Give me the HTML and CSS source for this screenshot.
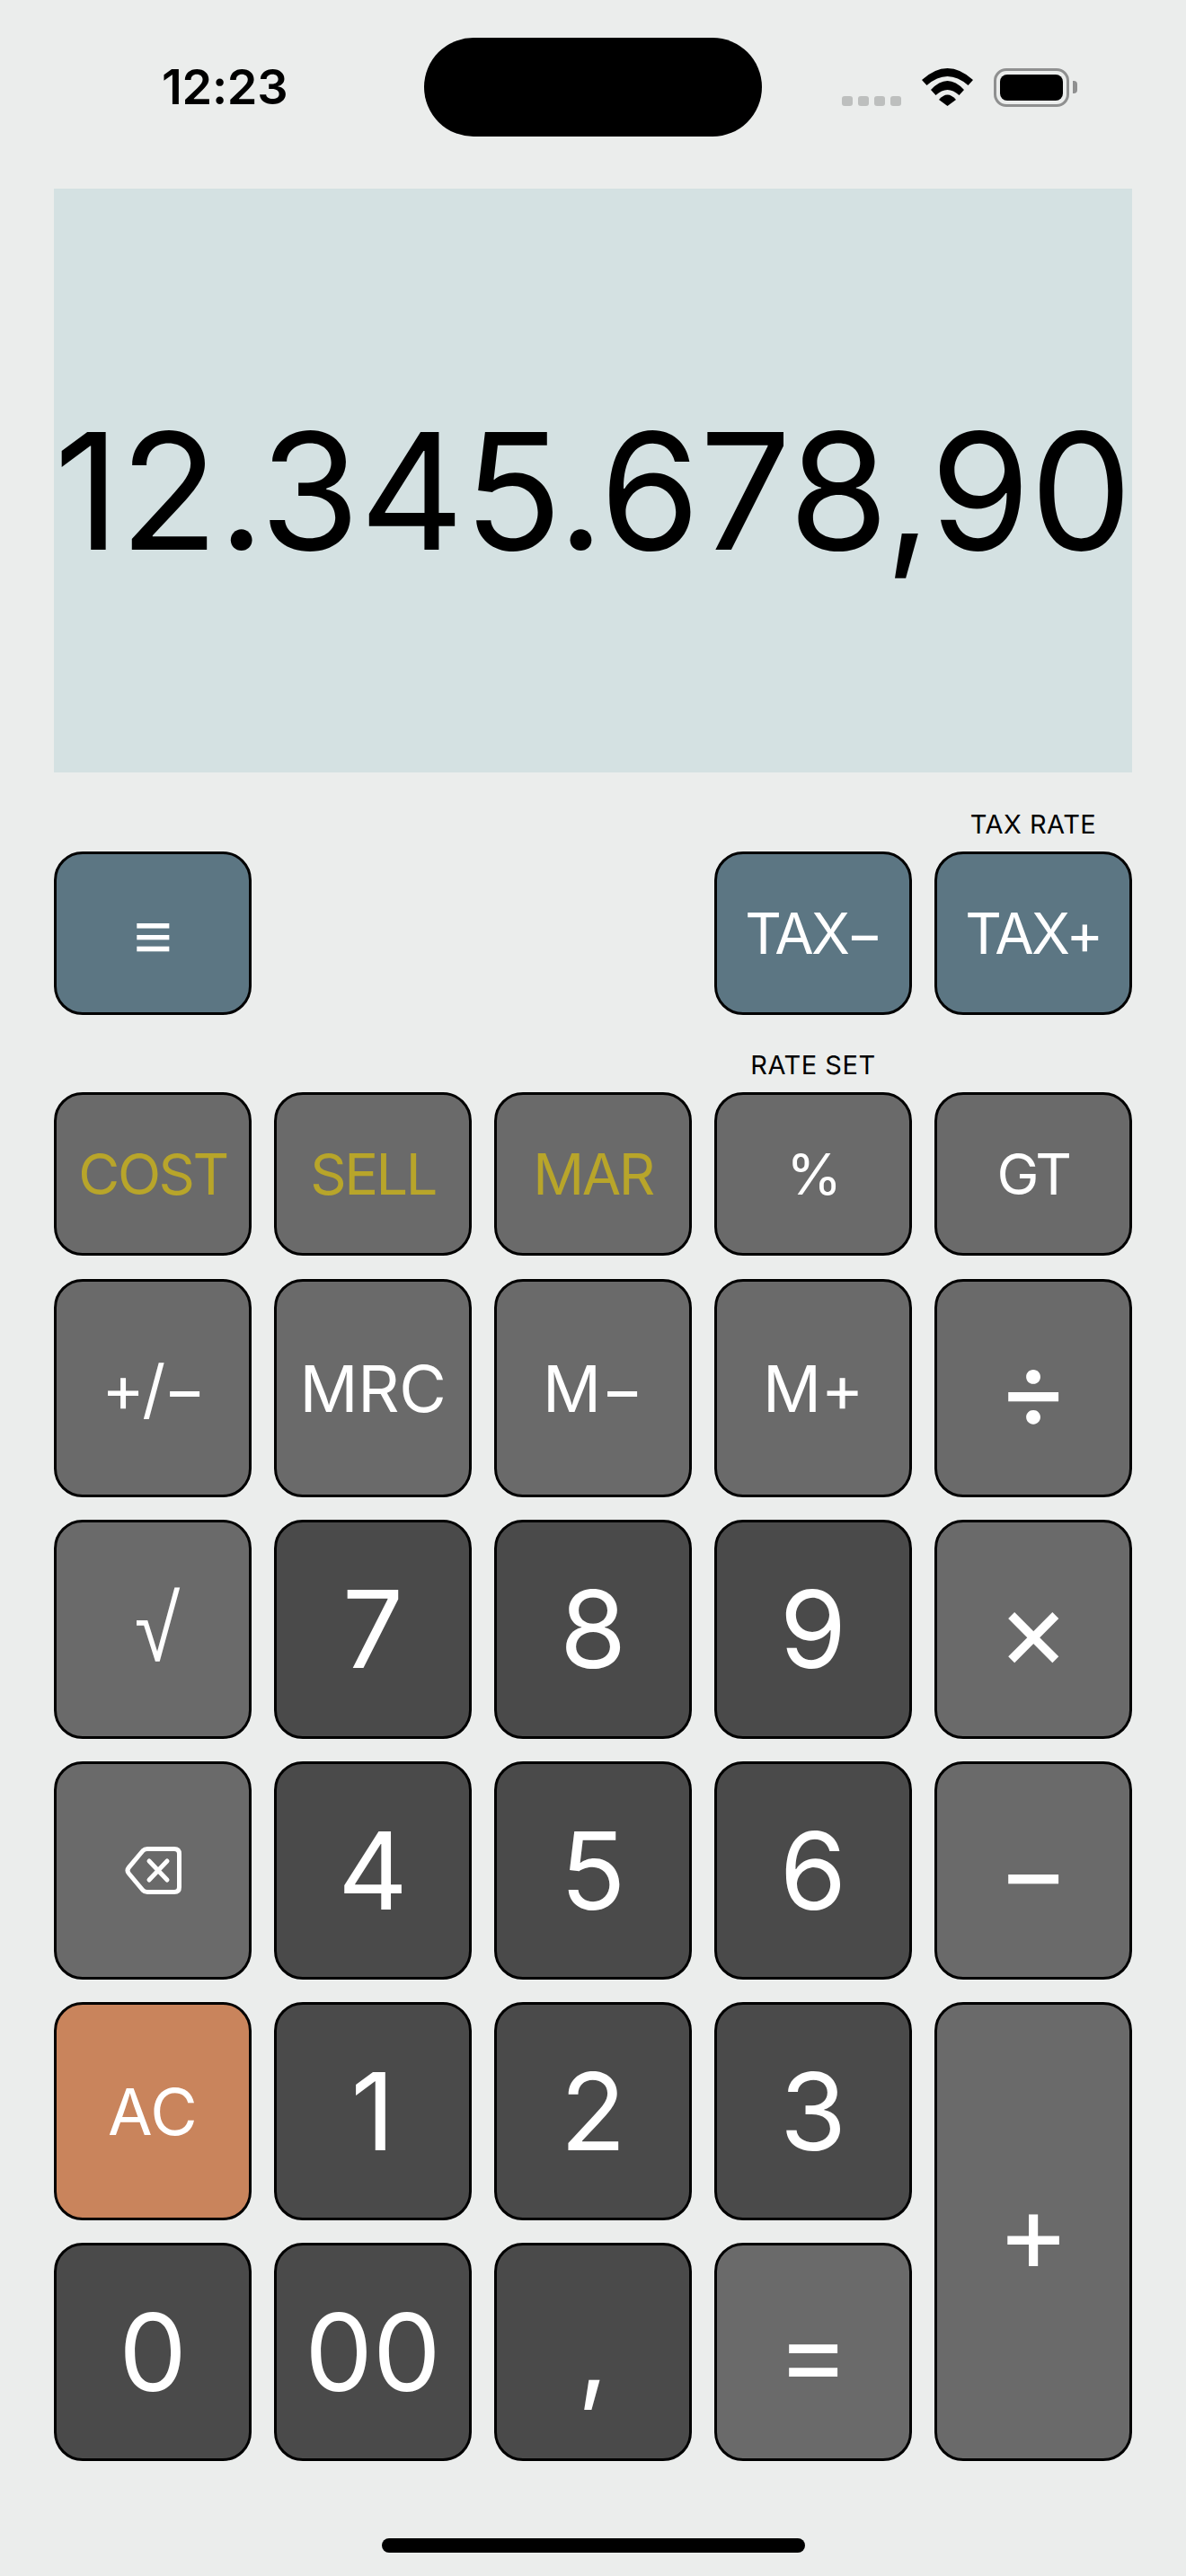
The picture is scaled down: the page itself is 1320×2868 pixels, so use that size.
FILE: index.html
```html
<!DOCTYPE html>
<html lang="en">
<head>
<meta charset="utf-8">
<title>Calculator</title>
<link rel="stylesheet" href="styles.css">
</head>
<body>
<div class="screen">
  <header class="status">
    <div class="time">12:23</div>
    <div class="island"></div>
    <div class="indicators">
      <div class="dots"><i></i><i></i><i></i><i></i></div>
      <svg class="wifi" viewBox="0 0 57 42" width="57" height="42"><path d="M0 13Q28.5-13 57 13L51.500 19Q28.500-1 5.500 19Z"/><path d="M10 24Q28.500 4 47 24L41.500 30Q28.500 18 15.500 30Z"/><path d="M19 35Q28.500 24 38 35L28.500 42Z"/></svg>
      <div class="battery"><div class="level"></div></div>
      <div class="cap"></div>
    </div>
  </header>
  <section class="display"><span>12.345.678,90</span></section>
  <section class="top-row">
    <button class="key teal menu">≡</button>
    <button class="key teal tax col4">TAX−</button>
    <button class="key teal tax"><span class="caption">TAX RATE</span>TAX+</button>
  </section>
  <section class="fn-row">
    <button class="key grey small gold">COST</button>
    <button class="key grey small gold">SELL</button>
    <button class="key grey small gold">MAR</button>
    <button class="key grey small"><span class="caption">RATE SET</span>%</button>
    <button class="key grey small">GT</button>
  </section>
  <section class="pad">
    <button class="key grey mid pm">+/−</button>
    <button class="key grey mid">MRC</button>
    <button class="key grey mid">M−</button>
    <button class="key grey mid">M+</button>
    <button class="key grey op">÷</button>
    <button class="key grey"><span class="root">√</span></button>
    <button class="key dark num">7</button>
    <button class="key dark num">8</button>
    <button class="key dark num">9</button>
    <button class="key grey op">×</button>
    <button class="key grey" aria-label="Backspace"><svg class="back" viewBox="0 0 63 53" width="63" height="53"><path d="M25 2.500H55Q60.500 2.500 60.500 8V45Q60.500 50.500 55 50.500H25Q22 50.500 20 48.500L4.500 30Q1.500 26.500 4.500 23L20 4.500Q22 2.500 25 2.500Z"/><path d="M27 16L47 37M47 16L27 37"/></svg></button>
    <button class="key dark num">4</button>
    <button class="key dark num">5</button>
    <button class="key dark num">6</button>
    <button class="key grey op">−</button>
    <button class="key orange ac">AC</button>
    <button class="key dark num">1</button>
    <button class="key dark num">2</button>
    <button class="key dark num">3</button>
    <button class="key grey op tall">+</button>
    <button class="key dark num">0</button>
    <button class="key dark num">00</button>
    <button class="key dark num">,</button>
    <button class="key grey op">=</button>
  </section>
  <div class="home"></div>
</div>
</body>
</html>
```
FILE: styles.css
```css
* { box-sizing: border-box; }
html, body { margin: 0; padding: 0; }
body { background: #ebedec; font-family: Inter, "Liberation Sans", sans-serif; }
.screen { width: 1320px; height: 2868px; padding: 42px 60px 0; background: #ebedec; display: flex; flex-direction: column; }

.status { height: 110px; display: flex; align-items: center; position: relative; }
.time { width: 412px; padding-left: 120px; font-size: 54px; font-weight: 600; letter-spacing: -0.3px; color: #000; margin-top: -1px; }
.island { width: 376px; height: 110px; background: #000; border-radius: 55px; }
.indicators { display: flex; align-items: flex-end; margin-left: 89px; height: 43px; }
.dots { display: flex; gap: 6px; margin-bottom: 1px; }
.dots i { display: block; width: 12px; height: 11px; border-radius: 3px; background: #bdbfbe; }
.wifi { display: block; margin-left: 23px; margin-bottom: 1px; fill: #000; }
.battery { width: 84px; height: 43px; margin-left: 23px; border: 3px solid #8f9090; border-radius: 14px; padding: 4px; }
.level { height: 100%; background: #000; border-radius: 8px; }
.cap { width: 5px; height: 14px; background: #8f9090; border-radius: 0 4px 4px 0; margin: 0 0 15px 4px; }

.display { margin-top: 58px; height: 650px; padding-top: 23px; background: #d4e1e2; display: flex; align-items: center; justify-content: center; }
.display span { font-size: 180px; letter-spacing: -0.3px; color: #000; white-space: nowrap; }

.top-row, .fn-row, .pad { display: grid; grid-template-columns: repeat(5, 220px); column-gap: 25px; }
.top-row { margin-top: 88px; grid-auto-rows: 182px; }
.col4 { grid-column: 4; }
.fn-row { margin-top: 86px; grid-auto-rows: 182px; }
.pad { margin-top: 26px; grid-auto-rows: 243.300px; row-gap: 25px; }

.key { position: relative; display: flex; align-items: center; justify-content: center; padding: 0; border: 3px solid #000; border-radius: 32px; color: #fff; font-family: inherit; font-weight: 400; }
.teal { background: #5c7683; }
.grey { background: #6a6a6a; }
.dark { background: #4a4a4a; }
.orange { background: #c9845c; }
.gold { color: #b8a52a; }
.tax, .small { font-size: 63px; letter-spacing: -2.500px; }
.menu { font-size: 74px; font-weight: 300; padding-top: 4px; }
.mid { font-size: 72px; letter-spacing: -0.4px; }
.pm { letter-spacing: -2.500px; }
.num { font-size: 120px; }
.op { font-size: 122px; }
.ac { font-size: 72px; }
.root { display: block; margin-left: 10px; font-family: "Liberation Sans", sans-serif; font-size: 92px; transform: scaleY(1.12); }
.tall { grid-column: 5; grid-row: 4 / span 2; }
.caption { position: absolute; left: -3px; right: -3px; bottom: calc(100% + 16px); text-align: center; font-size: 29px; line-height: 34px; letter-spacing: 0.5px; color: #000; }
.back { fill: none; stroke: #fff; stroke-width: 5px; stroke-linecap: round; stroke-linejoin: round; }

.home { width: 471px; height: 16px; margin: 86px auto 0; border-radius: 8px; background: #000; }
```
